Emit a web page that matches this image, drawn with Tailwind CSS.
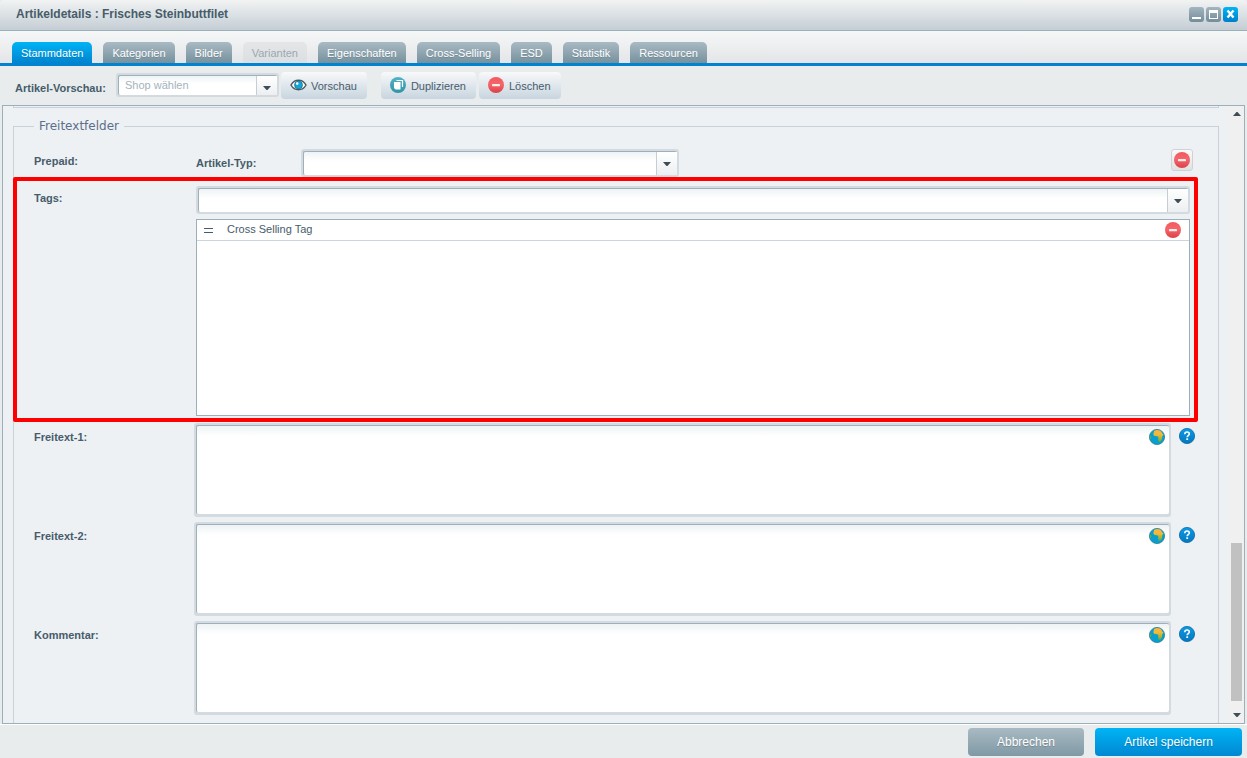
<!DOCTYPE html>
<html lang="de">
<head>
<meta charset="utf-8">
<title>Artikeldetails : Frisches Steinbuttfilet</title>
<script src="https://cdn.jsdelivr.net/npm/@tailwindcss/browser@4"></script>
</head>
<body class="flex h-screen flex-col overflow-hidden bg-[#e8eced] font-['Liberation_Sans',Arial,sans-serif] text-[11px] leading-4 text-[#475c6a]">

<svg class="absolute size-0" aria-hidden="true">
  <defs>
    <linearGradient id="red" x1="0" y1="0" x2="0" y2="1"><stop offset="0" stop-color="#f4585f"/><stop offset=".45" stop-color="#f4666b"/><stop offset="1" stop-color="#dc4048"/></linearGradient>
    <linearGradient id="teal" x1="0" y1="0" x2="0" y2="1"><stop offset="0" stop-color="#55b3c4"/><stop offset="1" stop-color="#2e93a6"/></linearGradient>
    <linearGradient id="blue" x1="0" y1="0" x2="0" y2="1"><stop offset="0" stop-color="#0a9aea"/><stop offset="1" stop-color="#0678bd"/></linearGradient>
    <linearGradient id="land" x1="0" y1="0" x2="0" y2="1"><stop offset="0" stop-color="#ffb43c"/><stop offset=".4" stop-color="#f0b93a"/><stop offset="1" stop-color="#6fae2c"/></linearGradient>
    <symbol id="minus" viewBox="0 0 16 16"><circle cx="8" cy="8" r="8" fill="url(#red)"/><rect x="4" y="7" width="8" height="2.2" rx=".4" fill="#fdeeee"/></symbol>
    <symbol id="help" viewBox="0 0 16 16"><circle cx="8" cy="8" r="7.6" fill="url(#blue)" stroke="#0568a6" stroke-width=".8"/><path d="M5.800 6.200C5.800 4.700 6.700 4 8 4s2.300.8 2.300 2c0 1.500-2.100 1.700-2.100 3.200" fill="none" stroke="#fff" stroke-width="1.600"/><rect x="7.300" y="10.300" width="1.800" height="1.700" fill="#fff"/></symbol>
    <symbol id="globe" viewBox="0 0 16 16"><circle cx="8" cy="8" r="7.600" fill="#089fd0" stroke="#2b7f93" stroke-width=".8"/><path d="M5.200 1.700 8 .9l3.200.7 1.600 1.800.8 1.700 1 .2-1.300 1.900-.4 3-1.500 2.400-1.700.2-.5-2.500.1-2.300-1.200-.8-2.600-.1-1.200-1.700.4-2z" fill="url(#land)"/><path d="M.8 6.300 2.300 8l-.4 1.700-1 .3z" fill="#6fae2c"/></symbol>
    <symbol id="caret" viewBox="0 0 8 4"><path d="M0 0h8L4.500 4h-1z" fill="#3f4d57"/></symbol>
  </defs>
</svg>

<header class="flex h-[31px] shrink-0 items-center justify-between rounded-t border-b border-[#9cb0bb] bg-linear-to-b from-[#f2f3f3] to-[#c4ced5] pr-[9px] pb-0.5 pl-4">
  <h1 class="text-[12px] font-bold">Artikeldetails : Frisches Steinbuttfilet</h1>
  <div class="flex gap-0.5">
    <button aria-label="Minimieren" class="size-[15px] rounded-[3px] bg-linear-to-b from-[#a3b5bf] to-[#748d9a]"><svg viewBox="0 0 15 15" class="size-[15px]"><path d="M3 10h9v2H3z" fill="#fff"/></svg></button>
    <button aria-label="Maximieren" class="size-[15px] rounded-[3px] bg-linear-to-b from-[#a3b5bf] to-[#748d9a]"><svg viewBox="0 0 15 15" class="size-[15px]"><path d="M3 3h9v9H3zM4 6v5h7V6z" fill="#fff" fill-rule="evenodd"/></svg></button>
    <button aria-label="Schließen" class="size-[15px] rounded-[3px] bg-linear-to-b from-[#00b4f5] to-[#007fcb]"><svg viewBox="0 0 15 15" class="size-[15px]"><path d="m4.500 3.500 6 7m0-7-6 7" stroke="#fff" stroke-width="2.400"/></svg></button>
  </div>
</header>

<nav class="flex h-[35px] shrink-0 items-end gap-[11px] border-b-[3px] border-[#0084cf] bg-linear-to-b from-[#f6f7f7] to-[#e3e5e8] pl-3 text-white">
  <button class="h-[21px] rounded-t-[5px] bg-linear-to-b from-[#00b4f5] to-[#0084cf] px-[9px] text-shadow-2xs">Stammdaten</button>
  <button class="h-[21px] rounded-t-[5px] bg-linear-to-b from-[#a9bac3] to-[#76919e] px-[9px] text-shadow-2xs">Kategorien</button>
  <button class="h-[21px] rounded-t-[5px] bg-linear-to-b from-[#a9bac3] to-[#76919e] px-[9px] text-shadow-2xs">Bilder</button>
  <button disabled class="h-[21px] rounded-t-[5px] bg-linear-to-b from-[#e4e6e8] to-[#dcdfe1] px-[9px] text-[#9aa8b1]">Varianten</button>
  <button class="h-[21px] rounded-t-[5px] bg-linear-to-b from-[#a9bac3] to-[#76919e] px-[9px] text-shadow-2xs">Eigenschaften</button>
  <button class="h-[21px] rounded-t-[5px] bg-linear-to-b from-[#a9bac3] to-[#76919e] px-[9px] text-shadow-2xs">Cross-Selling</button>
  <button class="h-[21px] rounded-t-[5px] bg-linear-to-b from-[#a9bac3] to-[#76919e] px-[9px] text-shadow-2xs">ESD</button>
  <button class="h-[21px] rounded-t-[5px] bg-linear-to-b from-[#a9bac3] to-[#76919e] px-[9px] text-shadow-2xs">Statistik</button>
  <button class="h-[21px] rounded-t-[5px] bg-linear-to-b from-[#a9bac3] to-[#76919e] px-[9px] text-shadow-2xs">Ressourcen</button>
</nav>

<div class="mx-0.5 flex h-[39px] shrink-0 items-start pt-1.5 pl-[13px]">
  <label for="shop" class="w-[101px] pt-2 font-bold">Artikel-Vorschau:</label>
  <div class="relative mt-px h-6 w-[163px] rounded-[3px] bg-[#d3dbe0] p-0.5">
    <select id="shop" class="block h-full w-full appearance-none rounded-[2px] border-t border-l border-[#9fb0bb] bg-linear-to-b from-[#eef3f5] to-white to-40% pb-0.5 pl-1.5 text-[#a3b3bd]"><option>Shop wählen</option></select>
    <span class="pointer-events-none absolute top-[3px] right-0.5 flex h-[19px] w-[21px] items-center justify-center border-l border-[#c5ced4] bg-linear-to-b from-white to-[#eceff1] pt-1"><svg class="h-1 w-2"><use href="#caret"/></svg></span>
  </div>
  <button class="ml-0.5 flex h-[27px] items-center gap-1 rounded bg-linear-to-b from-[#f8f9fa] to-[#c8d5df] pr-[10px] pl-[9px]">
    <svg class="mb-0.5 h-4 w-[17px]" viewBox="0 0 17 16"><path d="M1 8c2-3.600 4.600-4.800 7.500-4.800S14 4.400 16 8c-2 3.600-4.600 4.800-7.500 4.800S3 11.600 1 8z" fill="#fff" stroke="#4c5a63" stroke-width="1.500"/><circle cx="8.500" cy="8" r="4" fill="#12a5d5" stroke="#165a78" stroke-width=".6"/><circle cx="7.200" cy="6.600" r="1.300" fill="#fff"/></svg>Vorschau</button>
  <button class="ml-[14px] flex h-[27px] items-center gap-[5px] rounded bg-linear-to-b from-[#f8f9fa] to-[#c8d5df] pr-[10px] pl-[9px]">
    <svg class="mb-0.5 size-4" viewBox="0 0 16 16"><circle cx="8" cy="8" r="8" fill="url(#teal)"/><path d="M6.500 3.500h6v6.500" fill="none" stroke="#fff" stroke-width="1.200"/><path d="M4 5h6.500v7.500H5.500L4 11z" fill="#fff"/></svg>Duplizieren</button>
  <button class="ml-[3px] flex h-[27px] items-center gap-[5px] rounded bg-linear-to-b from-[#f8f9fa] to-[#c8d5df] pr-[10px] pl-[9px]">
    <svg class="mb-0.5 size-4"><use href="#minus"/></svg>Löschen</button>
</div>

<main class="mx-0.5 flex min-h-0 flex-1 border border-[#9cb0bb] bg-[#edf1f4]">
  <div class="min-w-0 flex-1 overflow-hidden pr-2.5 pl-2.5">
    <div class="h-0.5 border-x border-b border-[#c9d2d8]"></div>
    <fieldset class="mt-2.5 h-[640px] border border-[#c9d2d8] px-5 pt-[15px]">
      <legend class="px-[5px] font-['DejaVu_Sans',Verdana,sans-serif] text-[12px] leading-4 text-[#5c6f8a]">Freitextfelder</legend>

      <div class="flex h-7">
        <span class="w-[162px] pt-1 font-bold">Prepaid:</span>
        <label for="typ" class="w-[105px] pt-1.5 font-bold">Artikel-Typ:</label>
        <div class="relative h-7 w-[378px] rounded-[3px] bg-[#d3dbe0] p-0.5">
          <select id="typ" class="block h-full w-full appearance-none rounded-[2px] border-t border-l border-[#9fb0bb] bg-linear-to-b from-[#eef3f5] to-white to-40%"><option></option></select>
          <span class="pointer-events-none absolute top-[3px] right-0.5 flex h-[23px] w-[21px] items-center justify-center border-l border-[#c5ced4] bg-linear-to-b from-white to-[#eceff1]"><svg class="h-1 w-2"><use href="#caret"/></svg></span>
        </div>
        <button aria-label="Prepaid entfernen" class="mr-[5px] ml-auto flex size-[22px] items-center justify-center rounded-[3px] border border-[#cfd3d6] bg-linear-to-b from-[#fafafa] to-[#dfe1e2]"><svg class="size-4"><use href="#minus"/></svg></button>
      </div>

      <div class="relative mt-[9px] flex">
        <label for="tags" class="w-[162px] pt-1 font-bold">Tags:</label>
        <div class="min-w-0 flex-1 pr-2">
          <div class="relative h-7 rounded-[3px] bg-[#d3dbe0] p-0.5">
            <select id="tags" class="block h-full w-full appearance-none rounded-[2px] border-t border-l border-[#9fb0bb] bg-linear-to-b from-[#eef3f5] to-white to-40%"><option></option></select>
            <span class="pointer-events-none absolute top-[3px] right-0.5 flex h-[23px] w-[21px] items-center justify-center border-l border-[#c5ced4] bg-linear-to-b from-white to-[#eceff1]"><svg class="h-1 w-2"><use href="#caret"/></svg></span>
          </div>
          <ul class="mt-[5px] h-[197px] border border-[#9cb0bb] bg-white">
            <li class="flex h-[21px] items-center border-b border-[#c9d6de] pr-2 pl-[7px]">
              <svg class="h-2 w-[9px]" viewBox="0 0 9 8"><path d="M0 2h9v1H0zM0 6h9v1H0z" fill="#475c6a"/></svg>
              <span class="ml-3.5 flex-1 pb-0.5">Cross Selling Tag</span>
              <button aria-label="Tag entfernen" class="size-4"><svg class="size-4"><use href="#minus"/></svg></button>
            </li>
          </ul>
        </div>
        <div class="pointer-events-none absolute -top-[9px] right-0 -bottom-1.5 -left-[21px] rounded-[2px] border-4 border-[#fe0000]"></div>
      </div>

      <div class="mt-[7px] flex">
        <label for="f1" class="w-40 pt-1.5 font-bold">Freitext-1:</label>
        <div class="relative h-[94px] flex-1 rounded-[3px] bg-[#d3dbe0] p-0.5 pb-[3px]">
          <textarea id="f1" class="block h-full w-full resize-none rounded-[2px] border-t border-l border-[#9fb0bb] bg-linear-to-b from-[#eef3f5] to-white to-[10px]"></textarea>
          <svg class="absolute top-1.5 right-1.5 size-4"><use href="#globe"/></svg>
        </div>
        <button aria-label="Hilfe zu Freitext-1" class="mt-[5px] mr-[3px] ml-2 size-4"><svg class="size-4"><use href="#help"/></svg></button>
      </div>
      <div class="mt-[5px] flex">
        <label for="f2" class="w-40 pt-1.5 font-bold">Freitext-2:</label>
        <div class="relative h-[94px] flex-1 rounded-[3px] bg-[#d3dbe0] p-0.5 pb-[3px]">
          <textarea id="f2" class="block h-full w-full resize-none rounded-[2px] border-t border-l border-[#9fb0bb] bg-linear-to-b from-[#eef3f5] to-white to-[10px]"></textarea>
          <svg class="absolute top-1.5 right-1.5 size-4"><use href="#globe"/></svg>
        </div>
        <button aria-label="Hilfe zu Freitext-2" class="mt-[5px] mr-[3px] ml-2 size-4"><svg class="size-4"><use href="#help"/></svg></button>
      </div>
      <div class="mt-[5px] flex">
        <label for="kommentar" class="w-40 pt-1.5 font-bold">Kommentar:</label>
        <div class="relative h-[94px] flex-1 rounded-[3px] bg-[#d3dbe0] p-0.5 pb-[3px]">
          <textarea id="kommentar" class="block h-full w-full resize-none rounded-[2px] border-t border-l border-[#9fb0bb] bg-linear-to-b from-[#eef3f5] to-white to-[10px]"></textarea>
          <svg class="absolute top-1.5 right-1.5 size-4"><use href="#globe"/></svg>
        </div>
        <button aria-label="Hilfe zu Kommentar" class="mt-[5px] mr-[3px] ml-2 size-4"><svg class="size-4"><use href="#help"/></svg></button>
      </div>
    </fieldset>
  </div>
  <div class="flex w-[15px] shrink-0 flex-col items-center bg-[#f0f0f0]">
    <svg class="mt-1.5 h-1 w-2 rotate-180"><use href="#caret"/></svg>
    <div class="mt-auto h-[158px] w-[11px] bg-[#c1c1c1]"></div>
    <svg class="mt-3 mb-1.5 h-1 w-2"><use href="#caret"/></svg>
  </div>
</main>

<footer class="flex h-[34px] shrink-0 items-start justify-end gap-[11px] border-t border-white pt-[3px] pr-[5px] text-[12px] text-white">
  <button class="h-7 w-[116px] rounded bg-linear-to-b from-[#a9bac3] to-[#7f99a5] text-shadow-xs">Abbrechen</button>
  <button class="h-7 w-[147px] rounded bg-linear-to-b from-[#00b4f5] to-[#0088d2] text-shadow-xs">Artikel speichern</button>
</footer>
</body>
</html>
